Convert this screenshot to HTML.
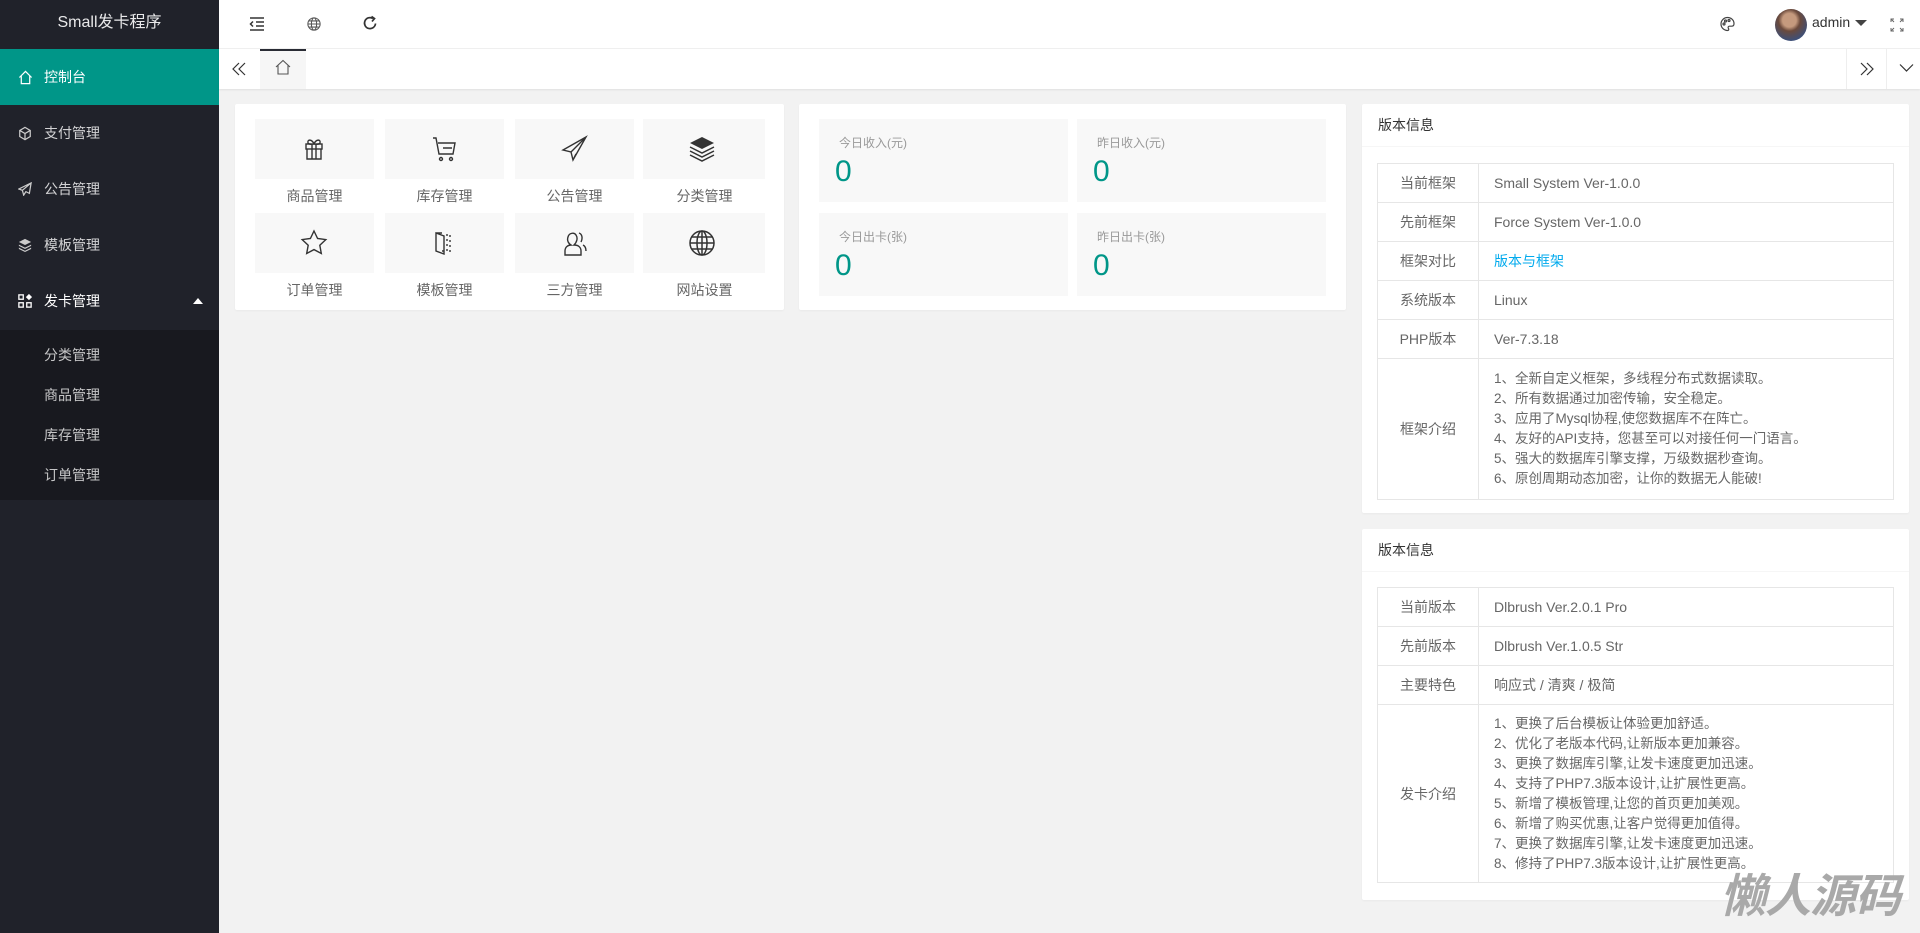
<!DOCTYPE html>
<html><head><meta charset="utf-8"><style>
*{margin:0;padding:0;box-sizing:border-box}
body{width:1920px;height:933px;overflow:hidden;background:#f2f2f2;font-family:"Liberation Sans","Noto Sans CJK SC",sans-serif;font-size:14px;color:#333;position:relative}
.abs{position:absolute}
#side{left:0;top:0;width:219px;height:933px;background:#20222a}
#logo{left:0;top:0;width:219px;height:49px;line-height:46px;text-align:center;color:#fff;font-size:16px;opacity:.9}
.mi{position:absolute;left:0;width:219px;height:56px;line-height:56px;color:rgba(255,255,255,.8);padding-left:44px;font-size:14px}
.mi svg{position:absolute;left:18px;top:21px}
.si{position:absolute;left:44px;color:rgba(255,255,255,.75);font-size:14px;line-height:20px}
#top{left:219px;top:0;width:1701px;height:49px;background:#fff;border-bottom:1px solid #f0f0f0}
#tabs{left:219px;top:49px;width:1701px;height:40px;background:#fff;box-shadow:0 1px 2px rgba(0,0,0,.08)}
.card{position:absolute;background:#fff;border-radius:2px;box-shadow:0 1px 2px rgba(0,0,0,.04)}
.gi{position:absolute;width:119px;height:60px;background:#f8f8f8}
.gi svg{position:absolute;left:44px;top:15px}
.gl{position:absolute;width:119px;text-align:center;color:#666;font-size:14px}
.st{position:absolute;width:249px;height:83px;background:#f8f8f8}
.st .l{position:absolute;left:20px;top:15px;color:#999;font-size:12px}
.st .n{position:absolute;left:16px;top:36px;color:#009688;font-size:30px}
.ch{position:absolute;left:0;top:0;right:0;height:43px;line-height:43px;padding-left:16px;border-bottom:1px solid #f6f6f6;color:#333;font-size:14px}
table{position:absolute;border-collapse:collapse;width:517px;font-size:14px;color:#666}
td{border:1px solid #e6e6e6;height:39px;padding:0 15px}
td.k{width:101px;text-align:center;padding:0}
td.m{line-height:20px;padding-top:10px;padding-bottom:10px}
</style></head><body>
<div id="side" class="abs">
<div id="logo" class="abs">Small发卡程序</div>
<div class="mi" style="top:49px;background:#009688;color:#fff"><svg width="15" height="15" viewBox="0 0 16 16" fill="none" stroke="#fff" stroke-width="1.3"><path d="M1.5 8L8 1.5 14.5 8M3.5 6.5V14.5h9V6.5"/></svg>控制台</div>
<div class="mi" style="top:105px"><svg width="14" height="15" viewBox="0 0 16 16" fill="none" stroke="#ccc" stroke-width="1.4"><path d="M8 1L14 4.5v7L8 15 2 11.5v-7zM2 4.5L8 8l6-3.5M8 8v7"/></svg>支付管理</div>
<div class="mi" style="top:161px"><svg width="14" height="14" viewBox="0 0 16 16" fill="none" stroke="#ccc" stroke-width="1.4"><path d="M15 1L1 8l4 1.5L6.5 15 9 11l4 2zM5 9.5L15 1"/></svg>公告管理</div>
<div class="mi" style="top:217px"><svg width="14" height="14" viewBox="0 0 16 16" fill="#ccc"><path d="M8 1l7 3.5-7 3.5-7-3.5z"/><path d="M1 7.5l7 3.5 7-3.5v1.5L8 12.5 1 9z"/><path d="M1 11l7 3.5 7-3.5v1.5L8 16 1 12.5z"/></svg>模板管理</div>
<div class="mi" style="top:273px;color:#fff"><svg width="14" height="14" viewBox="0 0 16 16" fill="none" stroke="#fff" stroke-width="1.5"><rect x="1" y="1" width="5" height="5"/><rect x="1" y="10" width="5" height="5"/><rect x="10" y="10" width="5" height="5"/><path d="M12.5 1l2.5 2.5-2.5 2.5L10 3.5z" fill="#fff"/></svg>发卡管理<span style="position:absolute;left:193px;top:25px;border:5px solid transparent;border-bottom:6px solid #fff;border-top:0"></span></div>
<div class="abs" style="left:0;top:330px;width:219px;height:170px;background:#18191f"></div>
<div class="si" style="top:345px">分类管理</div>
<div class="si" style="top:385px">商品管理</div>
<div class="si" style="top:425px">库存管理</div>
<div class="si" style="top:465px">订单管理</div>
</div>
<div id="top" class="abs">
<svg class="abs" style="left:30px;top:17px" width="16" height="14" viewBox="0 0 16 14" fill="none" stroke="#333" stroke-width="1.5"><path d="M1 1h14M7 5h8M7 9h8M1 13h14M4 4.5L1.5 7 4 9.5"/></svg>
<svg class="abs" style="left:88px;top:17px" width="14" height="14" viewBox="0 0 16 16" fill="none" stroke="#555" stroke-width="1.2"><circle cx="8" cy="8" r="7"/><ellipse cx="8" cy="8" rx="3" ry="7"/><path d="M1 8h14M2.5 4.5h11M2.5 11.5h11"/></svg>
<svg class="abs" style="left:143px;top:15px" width="16" height="16" viewBox="0 0 16 16" fill="none" stroke="#333" stroke-width="1.7"><path d="M13.5 8.5A5.5 5.5 0 1 1 11 3.5"/><path d="M9.5 1.5l3 2-2.5 3" /></svg>
<svg class="abs" style="left:1500px;top:16px" width="17" height="16" viewBox="0 0 16 16" fill="none" stroke="#444" stroke-width="1.2"><path d="M8 1.5a6.5 6.5 0 1 0 0 13c1.5 0 1.5-1.5.8-2.3-.6-.8 0-2 1.2-2h2c1.5 0 2.5-1 2.5-2.5C14.5 4 11.5 1.5 8 1.5z"/><circle cx="4.5" cy="8" r="1"/><circle cx="6" cy="5" r="1"/><circle cx="9.5" cy="4.5" r="1"/></svg>
<div class="abs" style="left:1556px;top:9px;width:32px;height:32px;border-radius:50%;background:radial-gradient(circle at 45% 35%,#c59a7e 0 25%,#6b4a3c 40%,#3d4f78 75%,#2c3c60)"></div>
<div class="abs" style="left:1593px;top:14px;font-size:14px;color:#333">admin</div>
<span class="abs" style="left:1636px;top:20px;border:6px solid transparent;border-top:6px solid #444;border-bottom:0"></span>
<svg class="abs" style="left:1671px;top:18px" width="14" height="14" viewBox="0 0 14 14" fill="none" stroke="#666" stroke-width="1"><path d="M1 4V1h3M10 1h3v3M13 10v3h-3M4 13H1v-3M1 1l3 3M13 1l-3 3M13 13l-3-3M1 13l3-3"/></svg>
</div>
<div id="tabs" class="abs">
<svg class="abs" style="left:13px;top:13px" width="14" height="14" viewBox="0 0 14 14" fill="none" stroke="#333" stroke-width="1.2"><path d="M7 1L1 7l6 6M13 1L7 7l6 6"/></svg>
<div class="abs" style="left:41px;top:0;width:46px;height:40px;background:#f6f6f6;border-top:2px solid #292b34"></div>
<svg class="abs" style="left:56px;top:10px" width="16" height="16" viewBox="0 0 16 16" fill="none" stroke="#555" stroke-width="1.1"><path d="M1 8L8 1.5 15 8M3 6.5V15h10V6.5"/></svg>
<div class="abs" style="left:1627px;top:0;width:1px;height:40px;background:#eee"></div>
<div class="abs" style="left:1667px;top:0;width:1px;height:40px;background:#eee"></div>
<svg class="abs" style="left:1641px;top:13px" width="14" height="14" viewBox="0 0 14 14" fill="none" stroke="#333" stroke-width="1.2"><path d="M1 1l6 6-6 6M7 1l6 6-6 6"/></svg>
<svg class="abs" style="left:1680px;top:14px" width="15" height="10" viewBox="0 0 15 10" fill="none" stroke="#333" stroke-width="1.2"><path d="M1 1.5l6.5 6.5 6.5-6.5"/></svg>
</div>

<div class="card" style="left:235px;top:104px;width:549px;height:206px">
<div class="gi" style="left:20px;top:15px"><svg width="30" height="30" viewBox="0 0 30 30" fill="none" stroke="#333" stroke-width="1.4"><rect x="7" y="10" width="16" height="5"/><path d="M8 15v10h14V15M13 10v15M17 10v15M15 10c-2-5-7-5-6-1 1 2 6 1 6 1 0 0 5 1 6-1 1-4-4-4-6 1"/></svg></div>
<div class="gl" style="left:20px;top:82px">商品管理</div>
<div class="gi" style="left:150px;top:15px"><svg width="30" height="30" viewBox="0 0 30 30" fill="none" stroke="#333" stroke-width="1.4"><path d="M4 4h3l3 16h14l2-11H9M14 14h9"/><circle cx="12" cy="25" r="1.5"/><circle cx="22" cy="25" r="1.5"/></svg></div>
<div class="gl" style="left:150px;top:82px">库存管理</div>
<div class="gi" style="left:280px;top:15px"><svg width="30" height="30" viewBox="0 0 30 30" fill="none" stroke="#333" stroke-width="1.4"><path d="M27 3L4 16l8 2 2 8zM12 18L27 3M14 26l3-6"/></svg></div>
<div class="gl" style="left:280px;top:82px">公告管理</div>
<div class="gi" style="left:408px;top:15px;width:122px"><svg width="30" height="30" viewBox="0 0 30 30"><path d="M15 3l12 6-12 6-12-6z" fill="#333"/><path d="M3 13l12 6 12-6M3 17l12 6 12-6M3 21l12 6 12-6" fill="none" stroke="#333" stroke-width="1.5"/></svg></div>
<div class="gl" style="left:410px;top:82px">分类管理</div>
<div class="gi" style="left:20px;top:109px"><svg width="30" height="30" viewBox="0 0 30 30" fill="none" stroke="#333" stroke-width="1.4"><path d="M15 3l3.6 7.5 8.2 1.1-6 5.7 1.5 8.2L15 21.6l-7.3 3.9 1.5-8.2-6-5.7 8.2-1.1z"/></svg></div>
<div class="gl" style="left:20px;top:176px">订单管理</div>
<div class="gi" style="left:150px;top:109px"><svg width="30" height="30" viewBox="0 0 30 30" fill="none" stroke="#333" stroke-width="1.4"><path d="M7 5l8 3v18l-8-3zM7 5h6M15 23h-2M18 6v2M18 11v2M18 16v2M18 21v2M21 7v2M21 12v2M21 17v2M21 22v2"/></svg></div>
<div class="gl" style="left:150px;top:176px">模板管理</div>
<div class="gi" style="left:280px;top:109px"><svg width="30" height="30" viewBox="0 0 30 30" fill="none" stroke="#333" stroke-width="1.4"><path d="M6 27v-4c0-4 3-6 6-6-3-2-4-5-3-8 1-4 6-5 8-2 2 3 1 7-2 10 4 0 7 2 7 6v4zM20 5c3 1 4 5 2 9M24 17c2 1 3 3 3 6"/></svg></div>
<div class="gl" style="left:280px;top:176px">三方管理</div>
<div class="gi" style="left:408px;top:109px;width:122px"><svg width="30" height="30" viewBox="0 0 30 30" fill="none" stroke="#333" stroke-width="1.5"><circle cx="15" cy="15" r="12"/><ellipse cx="15" cy="15" rx="5" ry="12"/><path d="M3 15h24M5 9h20M5 21h20M15 3v24"/></svg></div>
<div class="gl" style="left:410px;top:176px">网站设置</div>
</div>

<div class="card" style="left:799px;top:104px;width:547px;height:206px">
<div class="st" style="left:20px;top:15px"><div class="l">今日收入(元)</div><div class="n">0</div></div>
<div class="st" style="left:278px;top:15px"><div class="l">昨日收入(元)</div><div class="n">0</div></div>
<div class="st" style="left:20px;top:109px"><div class="l">今日出卡(张)</div><div class="n">0</div></div>
<div class="st" style="left:278px;top:109px"><div class="l">昨日出卡(张)</div><div class="n">0</div></div>
</div>

<div class="card" style="left:1362px;top:104px;width:547px;height:409px">
<div class="ch">版本信息</div>
<table style="left:15px;top:59px">
<tr><td class="k">当前框架</td><td>Small System Ver-1.0.0</td></tr>
<tr><td class="k">先前框架</td><td>Force System Ver-1.0.0</td></tr>
<tr><td class="k">框架对比</td><td style="color:#01AAED">版本与框架</td></tr>
<tr><td class="k">系统版本</td><td>Linux</td></tr>
<tr><td class="k">PHP版本</td><td>Ver-7.3.18</td></tr>
<tr><td class="k">框架介绍</td><td class="m" style="height:139px;font-size:13.5px">1、全新自定义框架，多线程分布式数据读取。<br>2、所有数据通过加密传输，安全稳定。<br>3、应用了Mysql协程,使您数据库不在阵亡。<br>4、友好的API支持，您甚至可以对接任何一门语言。<br>5、强大的数据库引擎支撑，万级数据秒查询。<br>6、原创周期动态加密，让你的数据无人能破!</td></tr>
</table>
</div>

<div class="card" style="left:1362px;top:529px;width:547px;height:371px">
<div class="ch">版本信息</div>
<table style="left:15px;top:58px">
<tr><td class="k">当前版本</td><td>Dlbrush Ver.2.0.1 Pro</td></tr>
<tr><td class="k">先前版本</td><td>Dlbrush Ver.1.0.5 Str</td></tr>
<tr><td class="k">主要特色</td><td>响应式 / 清爽 / 极简</td></tr>
<tr><td class="k">发卡介绍</td><td class="m" style="height:178px;line-height:20px;font-size:13.5px;padding-top:8px;padding-bottom:8px">1、更换了后台模板让体验更加舒适。<br>2、优化了老版本代码,让新版本更加兼容。<br>3、更换了数据库引擎,让发卡速度更加迅速。<br>4、支持了PHP7.3版本设计,让扩展性更高。<br>5、新增了模板管理,让您的首页更加美观。<br>6、新增了购买优惠,让客户觉得更加值得。<br>7、更换了数据库引擎,让发卡速度更加迅速。<br>8、修持了PHP7.3版本设计,让扩展性更高。</td></tr>
</table>
</div>
<div class="abs" style="left:1720px;top:868px;font-size:46px;font-weight:bold;font-style:italic;color:#a9a9a9;letter-spacing:-1px;line-height:56px">懒人源码</div>
</body></html>
